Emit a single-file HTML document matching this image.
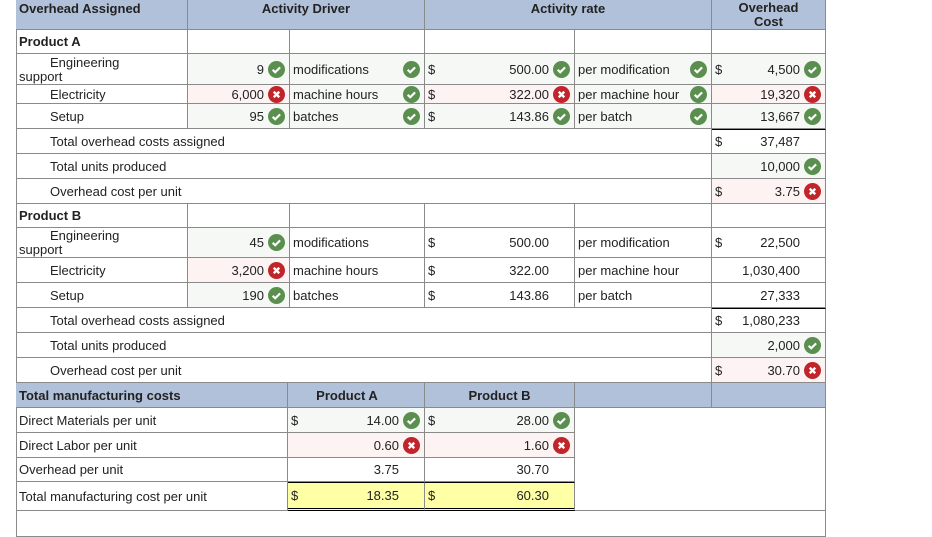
<!DOCTYPE html>
<html><head><meta charset="utf-8"><style>
body{margin:0;width:932px;height:537px;background:#fff;position:relative;overflow:hidden;font-family:"Liberation Sans",sans-serif;font-size:13px;color:#222}
.c{position:absolute;box-sizing:border-box;border-right:1px solid #8a8a8a;border-bottom:1px solid #8a8a8a;display:flex;align-items:center;white-space:nowrap}
.h{background:#b1c1da;font-weight:bold;align-items:flex-start;justify-content:center;padding-top:1px}
.r{justify-content:flex-end;padding-right:4px}
.g{background:#f5f8f4}.p{background:#fdf3f3}.y{background:#ffffa6}
.d{position:absolute;left:3px}
.i{width:17px;height:17px;margin-left:4px;flex:none}
.ia{position:absolute;right:4px;top:50%;margin-top:-8.5px}
.b{font-weight:bold}
.ind{padding-left:34px}
.l{padding-left:3px}
.tk{border-top:1px solid #000}
</style></head><body>
<svg width="0" height="0" style="position:absolute"><defs>
<symbol id="G" viewBox="0 0 16 16"><circle cx="8" cy="8" r="8" fill="#5b8f50"/><path d="M4.4 8.3l2.4 2.3 4.6-4.6" stroke="#fff" stroke-width="2" fill="none"/></symbol>
<symbol id="R" viewBox="0 0 16 16"><circle cx="8" cy="8" r="8" fill="#c0252b"/><path d="M5.4 5.4l5.2 5.2M10.6 5.4l-5.2 5.2" stroke="#fff" stroke-width="2.2" fill="none"/></symbol>
</defs></svg>
<div style="position:absolute;left:16px;top:0;width:1px;height:537px;background:#8a8a8a"></div>
<!-- header -->
<div class="c h" style="left:16px;top:0;width:172px;height:30px;justify-content:flex-start;padding-left:3px">Overhead Assigned</div>
<div class="c h" style="left:188px;top:0;width:237px;height:30px">Activity Driver</div>
<div class="c h" style="left:425px;top:0;width:287px;height:30px">Activity rate</div>
<div class="c h" style="left:712px;top:0;width:114px;height:30px;text-align:center;line-height:14px">Overhead<br>Cost</div>

<!-- Product A -->
<div class="c b l" style="left:16px;top:30px;width:172px;height:24px">Product A</div>
<div class="c" style="left:188px;top:30px;width:102px;height:24px"></div>
<div class="c" style="left:290px;top:30px;width:135px;height:24px"></div>
<div class="c" style="left:425px;top:30px;width:150px;height:24px"></div>
<div class="c" style="left:575px;top:30px;width:137px;height:24px"></div>
<div class="c" style="left:712px;top:30px;width:114px;height:24px"></div>

<div class="c l" style="left:16px;top:54px;width:172px;height:31px;line-height:14px;white-space:normal;display:block;padding-top:2px"><span style="padding-left:31px">Engineering</span><br>support</div>
<div class="c r g" style="left:188px;top:54px;width:102px;height:31px">9<svg class="i"><use href="#G"/></svg></div>
<div class="c l g" style="left:290px;top:54px;width:135px;height:31px">modifications<svg class="i ia"><use href="#G"/></svg></div>
<div class="c r g" style="left:425px;top:54px;width:150px;height:31px"><span class="d">$</span>500.00<svg class="i"><use href="#G"/></svg></div>
<div class="c l g" style="left:575px;top:54px;width:137px;height:31px">per modification<svg class="i ia"><use href="#G"/></svg></div>
<div class="c r g" style="left:712px;top:54px;width:114px;height:31px"><span class="d">$</span>4,500<svg class="i"><use href="#G"/></svg></div>

<div class="c ind" style="left:16px;top:85px;width:172px;height:19px">Electricity</div>
<div class="c r p" style="left:188px;top:85px;width:102px;height:19px">6,000<svg class="i"><use href="#R"/></svg></div>
<div class="c l g" style="left:290px;top:85px;width:135px;height:19px">machine hours<svg class="i ia"><use href="#G"/></svg></div>
<div class="c r p" style="left:425px;top:85px;width:150px;height:19px"><span class="d">$</span>322.00<svg class="i"><use href="#R"/></svg></div>
<div class="c l g" style="left:575px;top:85px;width:137px;height:19px">per machine hour<svg class="i ia"><use href="#G"/></svg></div>
<div class="c r p" style="left:712px;top:85px;width:114px;height:19px">19,320<svg class="i"><use href="#R"/></svg></div>

<div class="c ind" style="left:16px;top:104px;width:172px;height:25px">Setup</div>
<div class="c r g" style="left:188px;top:104px;width:102px;height:25px">95<svg class="i"><use href="#G"/></svg></div>
<div class="c l g" style="left:290px;top:104px;width:135px;height:25px">batches<svg class="i ia"><use href="#G"/></svg></div>
<div class="c r g" style="left:425px;top:104px;width:150px;height:25px"><span class="d">$</span>143.86<svg class="i"><use href="#G"/></svg></div>
<div class="c l g" style="left:575px;top:104px;width:137px;height:25px">per batch<svg class="i ia"><use href="#G"/></svg></div>
<div class="c r g" style="left:712px;top:104px;width:114px;height:25px">13,667<svg class="i"><use href="#G"/></svg></div>

<div class="c ind" style="left:16px;top:129px;width:696px;height:25px">Total overhead costs assigned</div>
<div class="c r tk" style="left:712px;top:129px;width:114px;height:25px;padding-right:25px"><span class="d">$</span>37,487</div>
<div class="c ind" style="left:16px;top:154px;width:696px;height:25px">Total units produced</div>
<div class="c r g" style="left:712px;top:154px;width:114px;height:25px">10,000<svg class="i"><use href="#G"/></svg></div>
<div class="c ind" style="left:16px;top:179px;width:696px;height:25px">Overhead cost per unit</div>
<div class="c r p" style="left:712px;top:179px;width:114px;height:25px"><span class="d">$</span>3.75<svg class="i"><use href="#R"/></svg></div>

<!-- Product B -->
<div class="c b l" style="left:16px;top:204px;width:172px;height:24px">Product B</div>
<div class="c" style="left:188px;top:204px;width:102px;height:24px"></div>
<div class="c" style="left:290px;top:204px;width:135px;height:24px"></div>
<div class="c" style="left:425px;top:204px;width:150px;height:24px"></div>
<div class="c" style="left:575px;top:204px;width:137px;height:24px"></div>
<div class="c" style="left:712px;top:204px;width:114px;height:24px"></div>

<div class="c l" style="left:16px;top:228px;width:172px;height:30px;line-height:14px;white-space:normal;display:block;padding-top:1px"><span style="padding-left:31px">Engineering</span><br>support</div>
<div class="c r g" style="left:188px;top:228px;width:102px;height:30px">45<svg class="i"><use href="#G"/></svg></div>
<div class="c l" style="left:290px;top:228px;width:135px;height:30px">modifications</div>
<div class="c r" style="left:425px;top:228px;width:150px;height:30px;padding-right:25px"><span class="d">$</span>500.00</div>
<div class="c l" style="left:575px;top:228px;width:137px;height:30px">per modification</div>
<div class="c r" style="left:712px;top:228px;width:114px;height:30px;padding-right:25px"><span class="d">$</span>22,500</div>

<div class="c ind" style="left:16px;top:258px;width:172px;height:25px">Electricity</div>
<div class="c r p" style="left:188px;top:258px;width:102px;height:25px">3,200<svg class="i"><use href="#R"/></svg></div>
<div class="c l" style="left:290px;top:258px;width:135px;height:25px">machine hours</div>
<div class="c r" style="left:425px;top:258px;width:150px;height:25px;padding-right:25px"><span class="d">$</span>322.00</div>
<div class="c l" style="left:575px;top:258px;width:137px;height:25px">per machine hour</div>
<div class="c r" style="left:712px;top:258px;width:114px;height:25px;padding-right:25px">1,030,400</div>

<div class="c ind" style="left:16px;top:283px;width:172px;height:25px">Setup</div>
<div class="c r g" style="left:188px;top:283px;width:102px;height:25px">190<svg class="i"><use href="#G"/></svg></div>
<div class="c l" style="left:290px;top:283px;width:135px;height:25px">batches</div>
<div class="c r" style="left:425px;top:283px;width:150px;height:25px;padding-right:25px"><span class="d">$</span>143.86</div>
<div class="c l" style="left:575px;top:283px;width:137px;height:25px">per batch</div>
<div class="c r" style="left:712px;top:283px;width:114px;height:25px;padding-right:25px">27,333</div>

<div class="c ind" style="left:16px;top:308px;width:696px;height:25px">Total overhead costs assigned</div>
<div class="c r tk" style="left:712px;top:308px;width:114px;height:25px;padding-right:25px"><span class="d">$</span>1,080,233</div>
<div class="c ind" style="left:16px;top:333px;width:696px;height:25px">Total units produced</div>
<div class="c r g" style="left:712px;top:333px;width:114px;height:25px">2,000<svg class="i"><use href="#G"/></svg></div>
<div class="c ind" style="left:16px;top:358px;width:696px;height:25px">Overhead cost per unit</div>
<div class="c r p" style="left:712px;top:358px;width:114px;height:25px"><span class="d">$</span>30.70<svg class="i"><use href="#R"/></svg></div>

<!-- totals -->
<div class="c h" style="left:16px;top:383px;width:272px;height:25px;justify-content:flex-start;padding-left:3px;align-items:center;padding-top:0">Total manufacturing costs</div>
<div class="c h" style="left:288px;top:383px;width:137px;height:25px;align-items:center;padding-top:0;padding-right:18px">Product A</div>
<div class="c h" style="left:425px;top:383px;width:150px;height:25px;align-items:center;padding-top:0">Product B</div>
<div class="c h" style="left:575px;top:383px;width:137px;height:25px"></div>
<div class="c h" style="left:712px;top:383px;width:114px;height:25px"></div>

<div class="c l" style="left:16px;top:408px;width:272px;height:25px">Direct Materials per unit</div>
<div class="c r g" style="left:288px;top:408px;width:137px;height:25px"><span class="d">$</span>14.00<svg class="i"><use href="#G"/></svg></div>
<div class="c r g" style="left:425px;top:408px;width:150px;height:25px"><span class="d">$</span>28.00<svg class="i"><use href="#G"/></svg></div>
<div class="c l" style="left:16px;top:433px;width:272px;height:25px">Direct Labor per unit</div>
<div class="c r p" style="left:288px;top:433px;width:137px;height:25px">0.60<svg class="i"><use href="#R"/></svg></div>
<div class="c r p" style="left:425px;top:433px;width:150px;height:25px">1.60<svg class="i"><use href="#R"/></svg></div>
<div class="c l" style="left:16px;top:458px;width:272px;height:24px">Overhead per unit</div>
<div class="c r" style="left:288px;top:458px;width:137px;height:24px;padding-right:25px">3.75</div>
<div class="c r" style="left:425px;top:458px;width:150px;height:24px;padding-right:25px">30.70</div>
<div class="c l" style="left:16px;top:482px;width:272px;height:29px">Total manufacturing cost per unit</div>
<div class="c r y tk" style="left:288px;top:482px;width:137px;height:29px;padding-right:25px;border-bottom:3px double #000"><span class="d">$</span>18.35</div>
<div class="c r y tk" style="left:425px;top:482px;width:150px;height:29px;padding-right:25px;border-bottom:3px double #000"><span class="d">$</span>60.30</div>
<div class="c" style="left:575px;top:408px;width:251px;height:103px"></div>
<div class="c" style="left:16px;top:511px;width:810px;height:26px"></div>
</body></html>
